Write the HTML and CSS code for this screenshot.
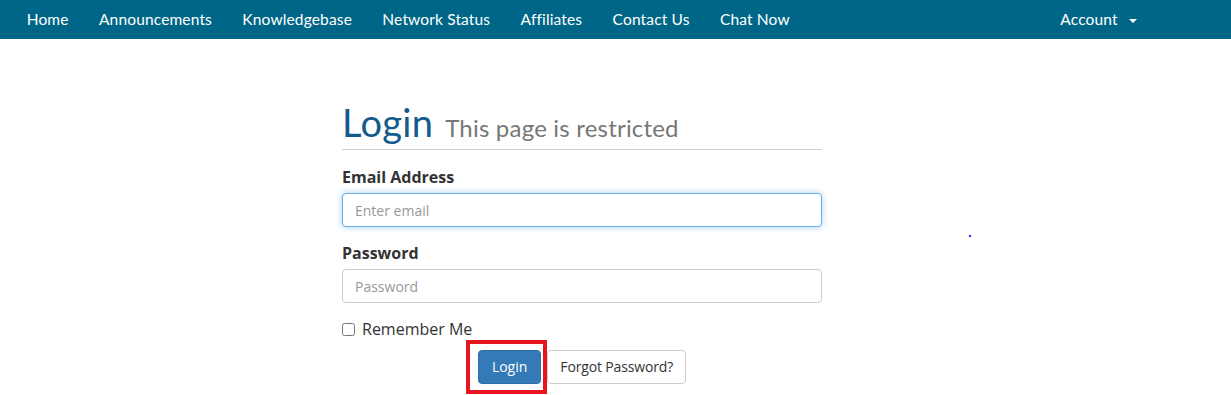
FILE: index.html
```html
<!DOCTYPE html>
<html lang="en">
<head>
<meta charset="utf-8">
<title>Login</title>
<link rel="stylesheet" href="styles.css">
</head>
<body>
<nav class="navbar">
  <ul class="nav-left">
    <li><a href="#">Home</a></li>
    <li><a href="#">Announcements</a></li>
    <li><a href="#">Knowledgebase</a></li>
    <li><a href="#">Network Status</a></li>
    <li><a href="#">Affiliates</a></li>
    <li><a href="#">Contact Us</a></li>
    <li><a href="#">Chat Now</a></li>
  </ul>
  <ul class="nav-right">
    <li><a href="#">Account <span class="caret"></span></a></li>
  </ul>
</nav>
<main class="page">
  <div class="login-wrap">
    <div class="page-header">
      <h1>Login <small>This page is restricted</small></h1>
    </div>
    <form class="login-form">
      <div class="form-group">
        <label class="label" for="email">Email Address</label>
        <input class="form-control focused" id="email" type="email" placeholder="Enter email">
      </div>
      <div class="form-group">
        <label class="label" for="pw">Password</label>
        <input class="form-control" id="pw" type="password" placeholder="Password">
      </div>
      <label class="checkbox"><input type="checkbox"> Remember Me</label>
      <div class="actions">
        <span class="highlight"><button class="btn btn-primary" type="button">Login</button></span>
        <button class="btn btn-default" type="button">Forgot Password?</button>
      </div>
    </form>
  </div>
  <span class="dot"></span>
</main>
</body>
</html>
```
FILE: styles.css
```css
* { box-sizing: border-box; }
html, body { margin: 0; padding: 0; }
body {
  font-family: "Open Sans", "Liberation Sans", sans-serif;
  color: #333;
  background: #fff;
  width: 1231px;
  height: 395px;
  overflow: hidden;
}
.navbar {
  height: 39px;
  background: #006687;
  display: flex;
  justify-content: space-between;
  padding: 0 79px 0 11.5px;
}
.navbar ul {
  list-style: none;
  margin: 0;
  padding: 0;
  display: flex;
}
.navbar a {
  display: block;
  padding: 0 15.2px;
  line-height: 39px;
  font-family: Lato, "Open Sans", sans-serif;
  font-size: 15.5px;
  letter-spacing: 0.15px;
  color: #fff;
  text-decoration: none;
}
.caret {
  display: inline-block;
  width: 0;
  height: 0;
  margin-left: 7px;
  vertical-align: middle;
  border-top: 4px solid #fff;
  border-left: 4px solid transparent;
  border-right: 4px solid transparent;
}
.page {
  position: relative;
  height: 356px;
}
.login-wrap {
  width: 480px;
  margin-left: 342px;
  padding-top: 62px;
}
.page-header {
  border-bottom: 1px solid #cfcfcf;
  padding-bottom: 0;
  margin-bottom: 16px;
}
h1 {
  margin: 0;
  font-family: Lato, "Open Sans", sans-serif;
  font-weight: 400;
  font-size: 38px;
  line-height: 43px;
  color: #145b8c;
  letter-spacing: 0.3px;
}
h1 small {
  font-size: 24px;
  color: #777;
  margin-left: 2px;
  letter-spacing: 0.2px;
}
.form-group { margin-bottom: 15px; }
.label {
  display: block;
  font-weight: 700;
  font-size: 16px;
  line-height: 22px;
  margin-bottom: 5px;
}
.form-control {
  display: block;
  width: 100%;
  height: 34px;
  padding: 6px 12px;
  font-family: "Open Sans", sans-serif;
  font-size: 14px;
  color: #555;
  border: 1px solid #ccc;
  border-radius: 4px;
  background: #fff;
  outline: none;
}
.form-control::placeholder { color: #999; }
.form-control.focused {
  border-color: #66afe9;
  box-shadow: 0 0 6px rgba(102, 175, 233, .6);
}
.checkbox {
  display: flex;
  align-items: center;
  gap: 7px;
  font-size: 16px;
  line-height: 22px;
  margin-top: 0;
}
.checkbox input { margin: 0; width: 13px; height: 13px; }
.actions {
  display: flex;
  justify-content: center;
  align-items: center;
  gap: 6px;
  margin-top: 10px;
}
.highlight {
  position: relative;
  display: inline-flex;
}
.highlight::after {
  content: "";
  position: absolute;
  left: -12px;
  top: -10px;
  right: -6px;
  bottom: -10px;
  border: 4px solid #e5141e;
}
.btn {
  height: 34px;
  padding: 6px 12px;
  font-family: "Open Sans", sans-serif;
  font-size: 14px;
  line-height: 20px;
  border-radius: 4px;
  border: 1px solid #ccc;
  background: #fff;
  color: #333;
}
.btn-default { letter-spacing: -0.15px; }
.btn-primary {
  background: #337ab7;
  border-color: #2e6da4;
  color: #fff;
  padding: 6px 13px;
}
.dot {
  position: absolute;
  left: 969px;
  top: 196px;
  width: 2px;
  height: 2px;
  background: #2233ee;
}
```
